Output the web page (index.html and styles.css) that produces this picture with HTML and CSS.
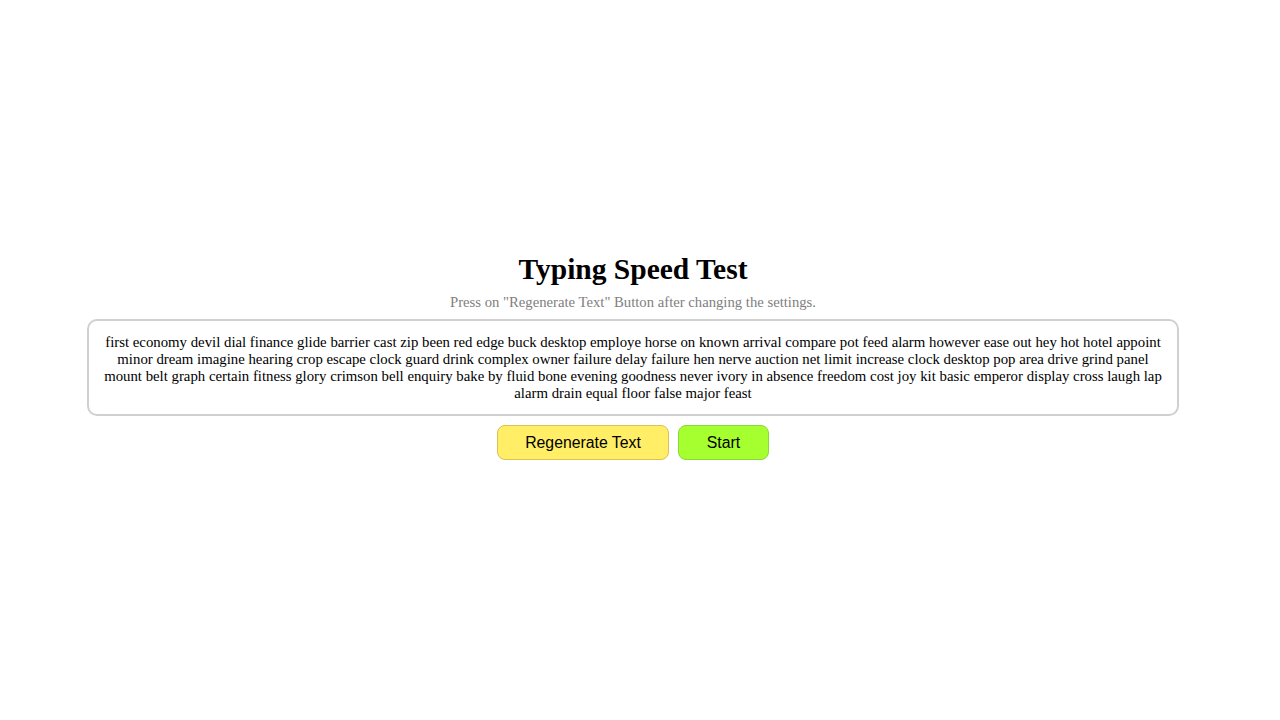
FILE: index.html
```html
<!DOCTYPE html>
<html>
<head>
<meta charset="utf-8">
<title>Typing Speed Test</title>
<link rel="stylesheet" href="styles.css">
</head>
<body>
<main class="page">
  <h1 class="title">Typing Speed Test</h1>
  <p class="hint">Press on "Regenerate Text" Button after changing the settings.</p>
  <div class="text-box">first economy devil dial finance glide barrier cast zip been red edge buck desktop employe horse on known arrival compare pot feed alarm however ease out hey hot hotel appoint minor dream imagine hearing crop escape clock guard drink complex owner failure delay failure hen nerve auction net limit increase clock desktop pop area drive grind panel mount belt graph certain fitness glory crimson bell enquiry bake by fluid bone evening goodness never ivory in absence freedom cost joy kit basic emperor display cross laugh lap alarm drain equal floor false major feast</div>
  <div class="actions">
    <button class="btn btn-regen">Regenerate Text</button>
    <button class="btn btn-start">Start</button>
  </div>
</main>
</body>
</html>
```
FILE: styles.css
```css
html, body {
  margin: 0;
  padding: 0;
  background: #ffffff;
}
body {
  font-family: "Liberation Serif", "Times New Roman", serif;
  color: #000;
}
.page {
  height: 720px;
  box-sizing: border-box;
  padding-right: 14px;
  padding-bottom: 8px;
  display: flex;
  flex-direction: column;
  align-items: center;
  justify-content: center;
}
.title {
  margin: 0;
  font-size: 29.5px;
  font-weight: bold;
  line-height: 34px;
}
.hint {
  margin: 8px 0 8px;
  font-size: 14.7px;
  line-height: 17px;
  color: #808080;
}
.text-box {
  width: 1092px;
  box-sizing: border-box;
  border: 2px solid #d0d0d0;
  border-radius: 10px;
  padding: 13px 12px 12px;
  font-size: 14.8px;
  line-height: 17px;
  text-align: center;
}
.actions {
  display: flex;
  gap: 9px;
  margin-top: 9px;
}
.btn {
  font-family: "Liberation Sans", Arial, sans-serif;
  font-size: 15.8px;
  height: 35px;
  border-radius: 8px;
  color: #000;
  cursor: pointer;
}
.btn-regen {
  width: 172px;
  background: #ffee66;
  border: 1.5px solid #dcc055;
}
.btn-start {
  width: 91px;
  background: #a6ff2e;
  border: 1.5px solid #8ad93a;
}
```
